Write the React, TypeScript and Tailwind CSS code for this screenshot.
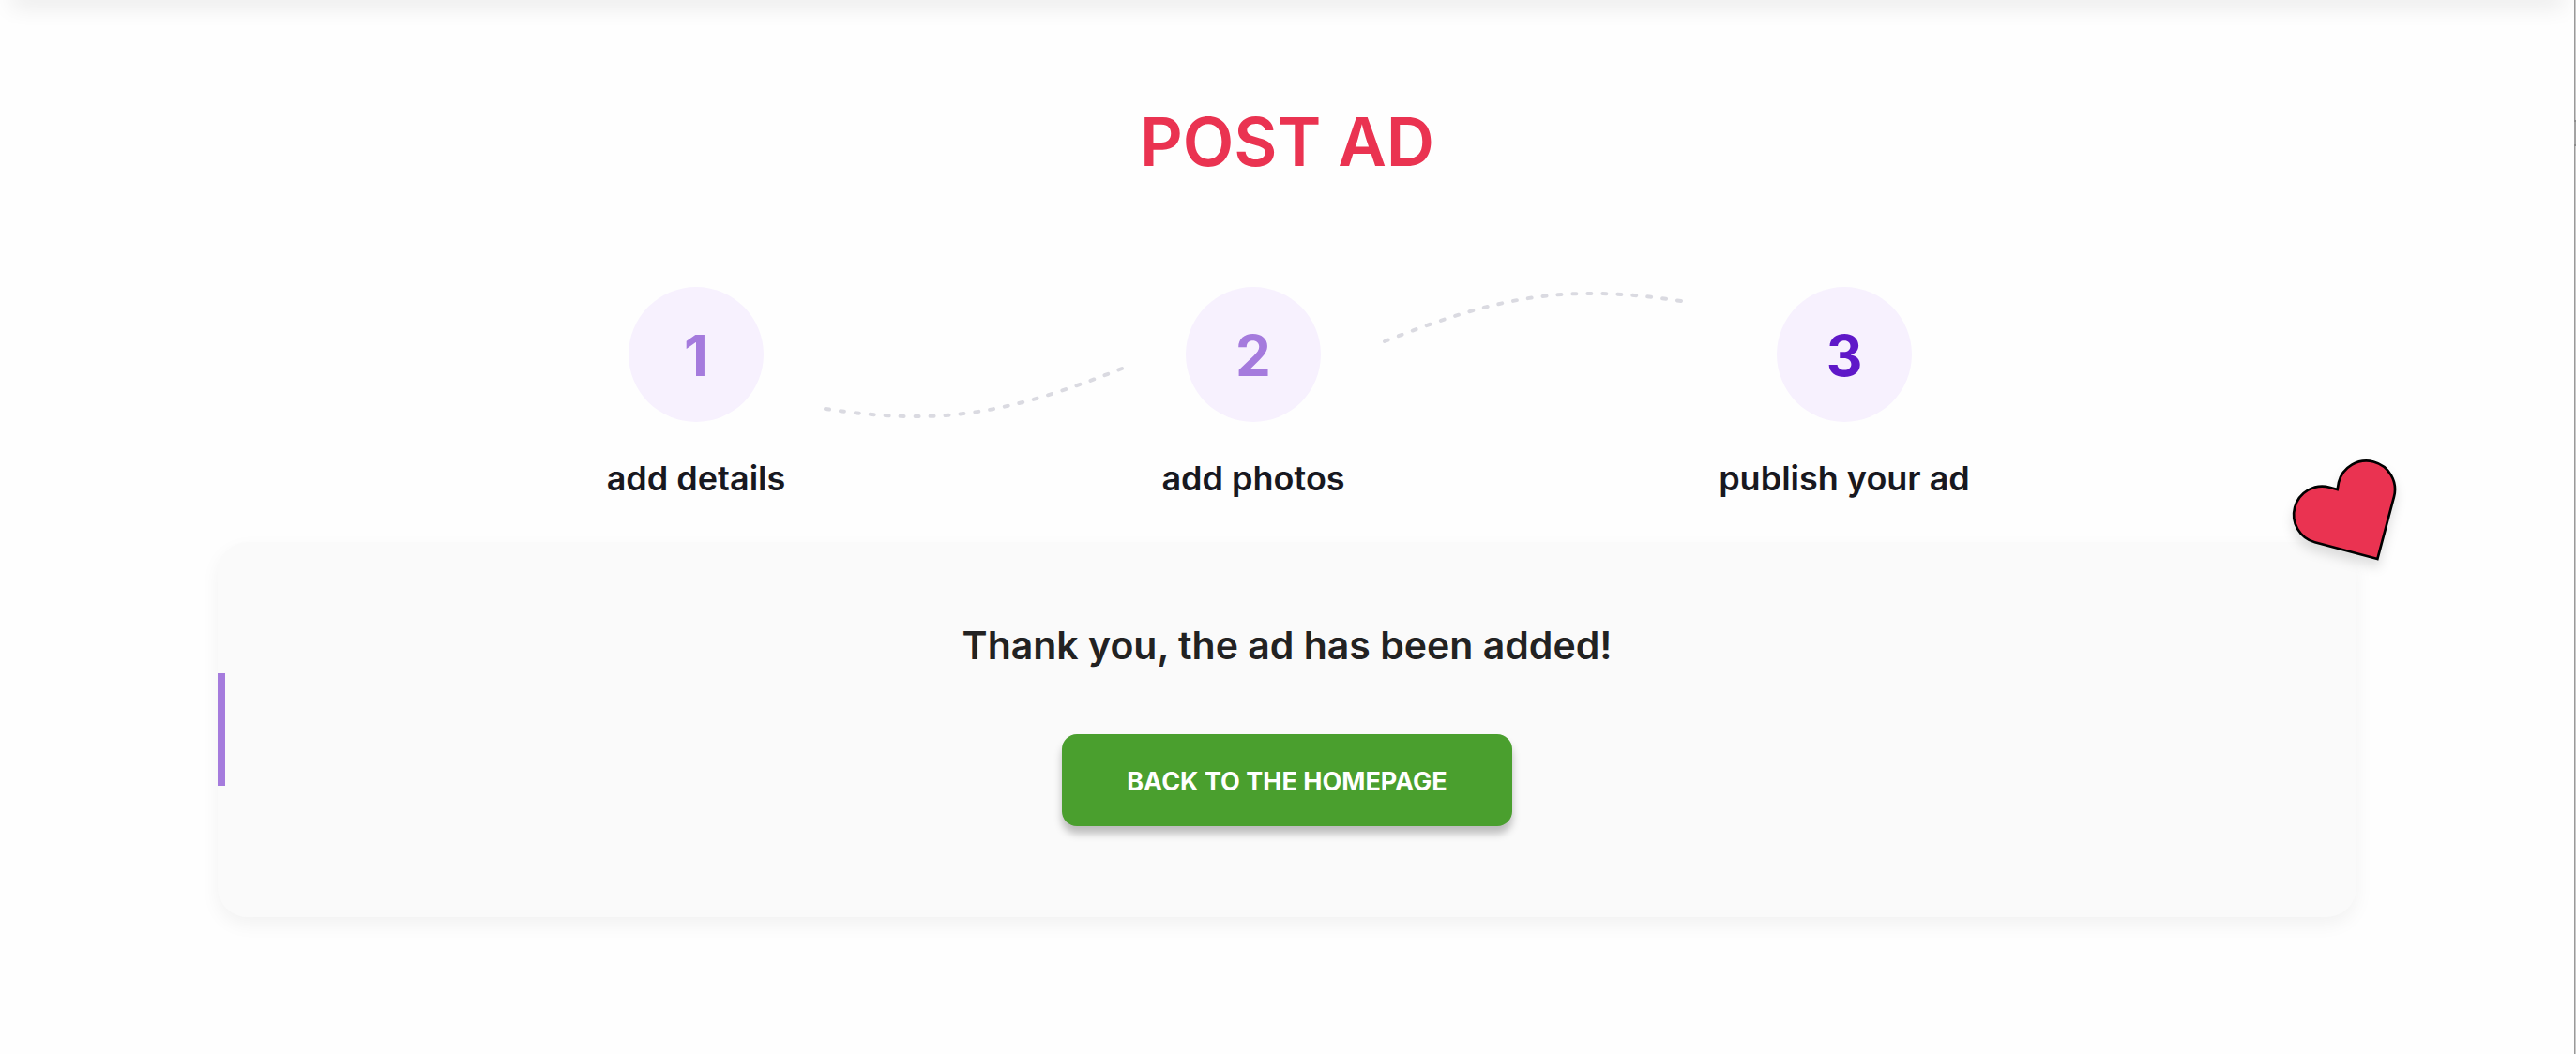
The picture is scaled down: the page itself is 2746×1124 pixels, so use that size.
import clsx from "clsx";

type StepProps = {
  number: number;
  label: string;
  active?: boolean;
  className?: string;
};

function Step({ number, label, active, className }: StepProps) {
  return (
    <li
      aria-current={active ? "step" : undefined}
      className={clsx("flex shrink-0 flex-col items-center", className)}
    >
      <span
        className={clsx(
          "flex size-36 items-center justify-center rounded-full bg-[#f7f1fe] pt-0.5 text-[60px] font-bold",
          active ? "text-[#5f18c8]" : "text-[#a57bdd]"
        )}
      >
        {number}
      </span>
      <span className="mt-[38px] text-[36px] leading-[44px] font-semibold whitespace-nowrap text-[#18181f]">
        {label}
      </span>
    </li>
  );
}

function Connector({ className }: { className?: string }) {
  return (
    <li aria-hidden="true" className={clsx("shrink-0", className)}>
      <svg width="321" height="60" viewBox="0 0 321 60" fill="none">
        <path
          d="M2 48C122 66 192 55 318 5"
          stroke="#dadae1"
          strokeWidth="4"
          strokeLinecap="round"
          strokeDasharray="4 12"
        />
      </svg>
    </li>
  );
}

function Heart({ className }: { className?: string }) {
  return (
    <svg viewBox="120 48 360 360" aria-hidden="true" className={className}>
      <path
        d="M403 378L203 325A91 91 0 0 1 250 149L275 156L279 133A91 91 0 0 1 456 179Z"
        fill="#ea3351"
        stroke="#000"
        strokeWidth="8"
      />
    </svg>
  );
}

export default function App() {
  return (
    <div className="relative flex min-h-screen overflow-hidden bg-[#fefefe] font-['Inter',sans-serif]">
      <div className="absolute inset-x-0 -top-10 h-10 shadow-[0_18px_24px_-12px_rgba(0,0,0,0.1)]" />

      <main className="flex min-w-0 flex-1 flex-col pt-[111px] pb-36">
        <h1 className="text-center text-[71px] leading-[80px] font-semibold text-[#ea3351]">
          POST AD
        </h1>

        <ol className="mt-[115px] flex items-start justify-center gap-10">
          <Step number={1} label="add details" className="w-[192px]" />
          <Connector className="mt-[82px]" />
          <Step number={2} label="add photos" className="w-[194px]" />
          <Connector className="mt-[3px] rotate-180" />
          <Step number={3} label="publish your ad" active className="w-[264px]" />
        </ol>

        <section className="relative mx-58 mt-[46px] flex flex-col items-center rounded-[32px] bg-[#fafafa] pt-[82px] pb-[97px] shadow-[0_8px_20px_rgba(0,0,0,0.05)]">
          <span className="absolute top-1/2 left-0 h-30 w-2 -translate-y-1/2 bg-[#a57bdd]" />
          <Heart className="absolute -top-[92px] -right-12 size-30 drop-shadow-[0_8px_6px_rgba(0,0,0,0.12)]" />

          <h2 className="text-center text-[41px] leading-[56px] font-semibold text-[#222222]">
            Thank you, the ad has been added!
          </h2>
          <button
            type="button"
            className="mt-[67px] h-[98px] w-[480px] rounded-2xl bg-[#4a9f2e] pt-1 text-[27px] font-bold text-white shadow-[0_8px_8px_rgba(0,0,0,0.25)]"
          >
            BACK TO THE HOMEPAGE
          </button>
        </section>
      </main>

      <div className="relative w-0.5 shrink-0 border-l border-[#999999] bg-[#c8c8c8]">
        <span className="absolute top-32 right-0 h-7 w-0.5 border-y-2 border-[#8c8c8c] bg-[#a3a3a3]" />
      </div>
    </div>
  );
}
